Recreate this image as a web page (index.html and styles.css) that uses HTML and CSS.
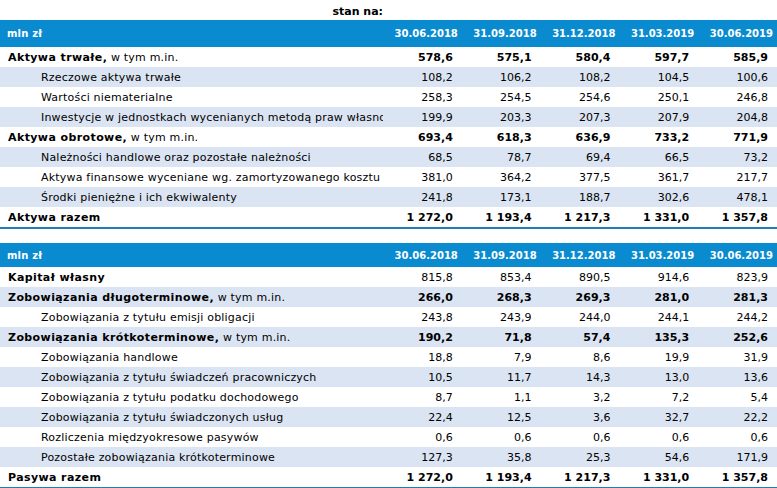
FILE: index.html
```html
<!DOCTYPE html>
<html lang="pl">
<head>
<meta charset="utf-8">
<title>Bilans</title>
<link rel="stylesheet" href="styles.css">
</head>
<body>
<div class="page">
  <div class="caption"><span>stan na:</span></div>
  <table class="fin">
    <colgroup><col class="c-label"><col><col><col><col><col></colgroup>
    <thead>
      <tr><th class="lbl">mln zł</th><th>30.06.2018</th><th>31.09.2018</th><th>31.12.2018</th><th>31.03.2019</th><th>30.06.2019</th></tr>
    </thead>
    <tbody>
      <tr class="main"><td class="lbl"><div class="clip"><b>Aktywa trwałe,</b> w tym m.in.</div></td><td>578,6</td><td>575,1</td><td>580,4</td><td>597,7</td><td>585,9</td></tr>
      <tr class="sub"><td class="lbl"><div class="clip">Rzeczowe aktywa trwałe</div></td><td>108,2</td><td>106,2</td><td>108,2</td><td>104,5</td><td>100,6</td></tr>
      <tr class="sub"><td class="lbl"><div class="clip">Wartości niematerialne</div></td><td>258,3</td><td>254,5</td><td>254,6</td><td>250,1</td><td>246,8</td></tr>
      <tr class="sub"><td class="lbl"><div class="clip">Inwestycje w jednostkach wycenianych metodą praw własności</div></td><td>199,9</td><td>203,3</td><td>207,3</td><td>207,9</td><td>204,8</td></tr>
      <tr class="main"><td class="lbl"><div class="clip"><b>Aktywa obrotowe,</b> w tym m.in.</div></td><td>693,4</td><td>618,3</td><td>636,9</td><td>733,2</td><td>771,9</td></tr>
      <tr class="sub"><td class="lbl"><div class="clip">Należności handlowe oraz pozostałe należności</div></td><td>68,5</td><td>78,7</td><td>69,4</td><td>66,5</td><td>73,2</td></tr>
      <tr class="sub"><td class="lbl"><div class="clip">Aktywa finansowe wyceniane wg. zamortyzowanego kosztu</div></td><td>381,0</td><td>364,2</td><td>377,5</td><td>361,7</td><td>217,7</td></tr>
      <tr class="sub"><td class="lbl"><div class="clip">Środki pieniężne i ich ekwiwalenty</div></td><td>241,8</td><td>173,1</td><td>188,7</td><td>302,6</td><td>478,1</td></tr>
      <tr class="main total"><td class="lbl"><div class="clip"><b>Aktywa razem</b></div></td><td>1 272,0</td><td>1 193,4</td><td>1 217,3</td><td>1 331,0</td><td>1 357,8</td></tr>
    </tbody>
  </table>

  <table class="fin second">
    <colgroup><col class="c-label"><col><col><col><col><col></colgroup>
    <thead>
      <tr><th class="lbl">mln zł</th><th>30.06.2018</th><th>31.09.2018</th><th>31.12.2018</th><th>31.03.2019</th><th>30.06.2019</th></tr>
    </thead>
    <tbody>
      <tr class="main plain"><td class="lbl"><div class="clip"><b>Kapitał własny</b></div></td><td>815,8</td><td>853,4</td><td>890,5</td><td>914,6</td><td>823,9</td></tr>
      <tr class="main"><td class="lbl"><div class="clip"><b>Zobowiązania długoterminowe,</b> w tym m.in.</div></td><td>266,0</td><td>268,3</td><td>269,3</td><td>281,0</td><td>281,3</td></tr>
      <tr class="sub"><td class="lbl"><div class="clip">Zobowiązania z tytułu emisji obligacji</div></td><td>243,8</td><td>243,9</td><td>244,0</td><td>244,1</td><td>244,2</td></tr>
      <tr class="main"><td class="lbl"><div class="clip"><b>Zobowiązania krótkoterminowe,</b> w tym m.in.</div></td><td>190,2</td><td>71,8</td><td>57,4</td><td>135,3</td><td>252,6</td></tr>
      <tr class="sub"><td class="lbl"><div class="clip">Zobowiązania handlowe</div></td><td>18,8</td><td>7,9</td><td>8,6</td><td>19,9</td><td>31,9</td></tr>
      <tr class="sub"><td class="lbl"><div class="clip">Zobowiązania z tytułu świadczeń pracowniczych</div></td><td>10,5</td><td>11,7</td><td>14,3</td><td>13,0</td><td>13,6</td></tr>
      <tr class="sub"><td class="lbl"><div class="clip">Zobowiązania z tytułu podatku dochodowego</div></td><td>8,7</td><td>1,1</td><td>3,2</td><td>7,2</td><td>5,4</td></tr>
      <tr class="sub"><td class="lbl"><div class="clip">Zobowiązania z tytułu świadczonych usług</div></td><td>22,4</td><td>12,5</td><td>3,6</td><td>32,7</td><td>22,2</td></tr>
      <tr class="sub"><td class="lbl"><div class="clip">Rozliczenia międzyokresowe pasywów</div></td><td>0,6</td><td>0,6</td><td>0,6</td><td>0,6</td><td>0,6</td></tr>
      <tr class="sub"><td class="lbl"><div class="clip">Pozostałe zobowiązania krótkoterminowe</div></td><td>127,3</td><td>35,8</td><td>25,3</td><td>54,6</td><td>171,9</td></tr>
      <tr class="main total"><td class="lbl"><div class="clip"><b>Pasywa razem</b></div></td><td>1 272,0</td><td>1 193,4</td><td>1 217,3</td><td>1 331,0</td><td>1 357,8</td></tr>
    </tbody>
  </table>
</div>
</body>
</html>
```

FILE: styles.css
```css
html, body {
  margin: 0;
  padding: 0;
  background: #ffffff;
}

.page {
  width: 777px;
  font-family: "DejaVu Sans", Verdana, sans-serif;
  font-size: 11px;
  color: #000000;
}

.caption {
  width: 383px;
  height: 20px;
  display: flex;
  align-items: flex-end;
  justify-content: flex-end;
  font-weight: bold;
  line-height: 14px;
  padding-bottom: 1px;
  box-sizing: border-box;
}

.fin {
  width: 777px;
  table-layout: fixed;
  border-collapse: collapse;
  border-spacing: 0;
}

.fin .c-label {
  width: 383px;
}

.fin.second {
  margin-top: 14px;
}

.fin th {
  background: #0a8bd0;
  color: #ffffff;
  font-size: 10px;
  font-weight: bold;
  text-align: right;
  height: 27px;
  padding: 0 4px 0 0;
  white-space: nowrap;
}

.fin.second th {
  height: 24px;
}

.fin th.lbl {
  text-align: left;
  padding-left: 7px;
  letter-spacing: 0.2px;
}

.fin td {
  height: 20px;
  padding: 0 9px 0 0;
  text-align: right;
  white-space: nowrap;
  vertical-align: middle;
}

.fin tbody tr:nth-child(even) td {
  background: #dbe4f2;
}

.fin td.lbl {
  text-align: left;
  padding: 0;
  letter-spacing: 0.2px;
}

.fin td.lbl b {
  letter-spacing: 0.4px;
}

.clip {
  overflow: hidden;
  white-space: nowrap;
}

.main .clip {
  padding-left: 8px;
}

.sub .clip {
  padding-left: 41px;
}

.main td {
  font-weight: bold;
}

.main td.lbl {
  font-weight: normal;
}

.main.plain td {
  font-weight: normal;
}

.total td {
  border-bottom: 2px solid #1f7db5;
}
```
